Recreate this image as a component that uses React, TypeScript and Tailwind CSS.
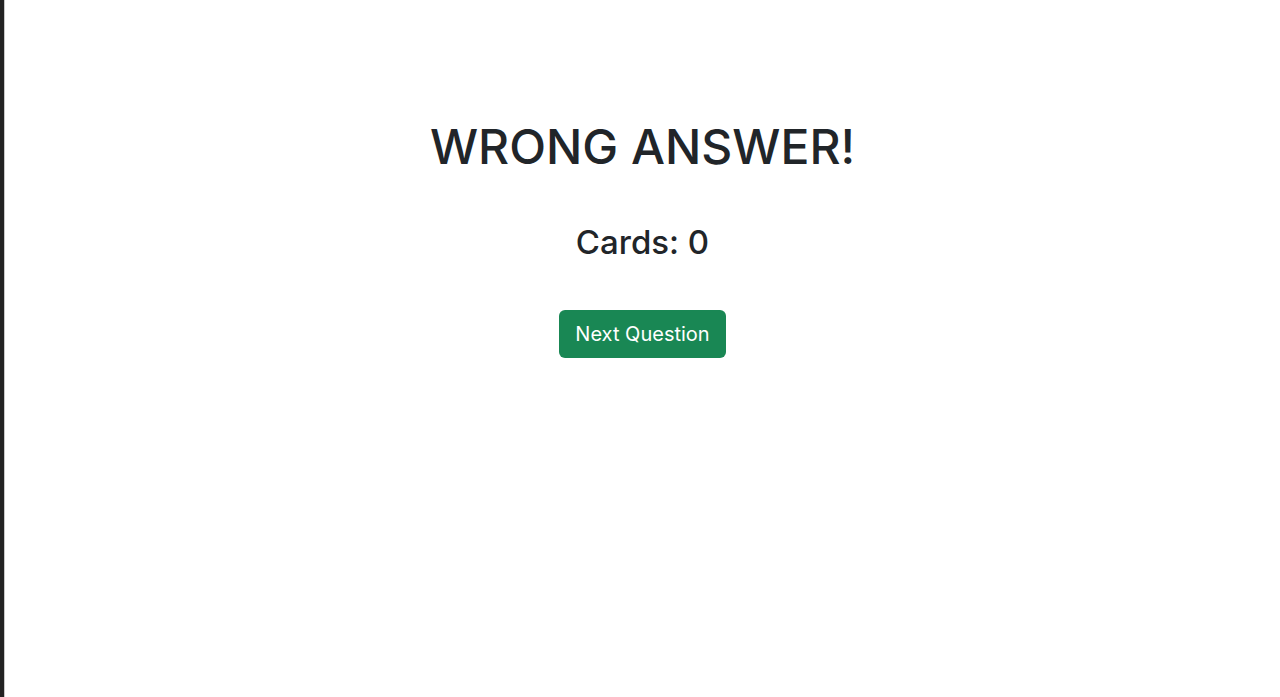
import React from "react";

export default function App() {
  return (
    <div className="flex min-h-[697px] w-full bg-white" style={{ fontFamily: "Inter, 'Liberation Sans', sans-serif" }}>
      <div className="w-[4px] shrink-0 bg-[#222222]" />
      <div className="w-px shrink-0 bg-[#c8c8c8]" />
      <main className="flex flex-1 flex-col items-center pt-[118px] text-[#212529]">
        <h1 className="text-[48px] font-medium leading-[1.2]">WRONG ANSWER!</h1>
        <h2 className="mt-[47px] text-[33px] font-medium leading-[1.2]">Cards: 0</h2>
        <button className="mt-[48px] h-[48px] rounded-[6px] bg-[#198754] px-4 text-[20px] text-white">
          Next Question
        </button>
      </main>
    </div>
  );
}
